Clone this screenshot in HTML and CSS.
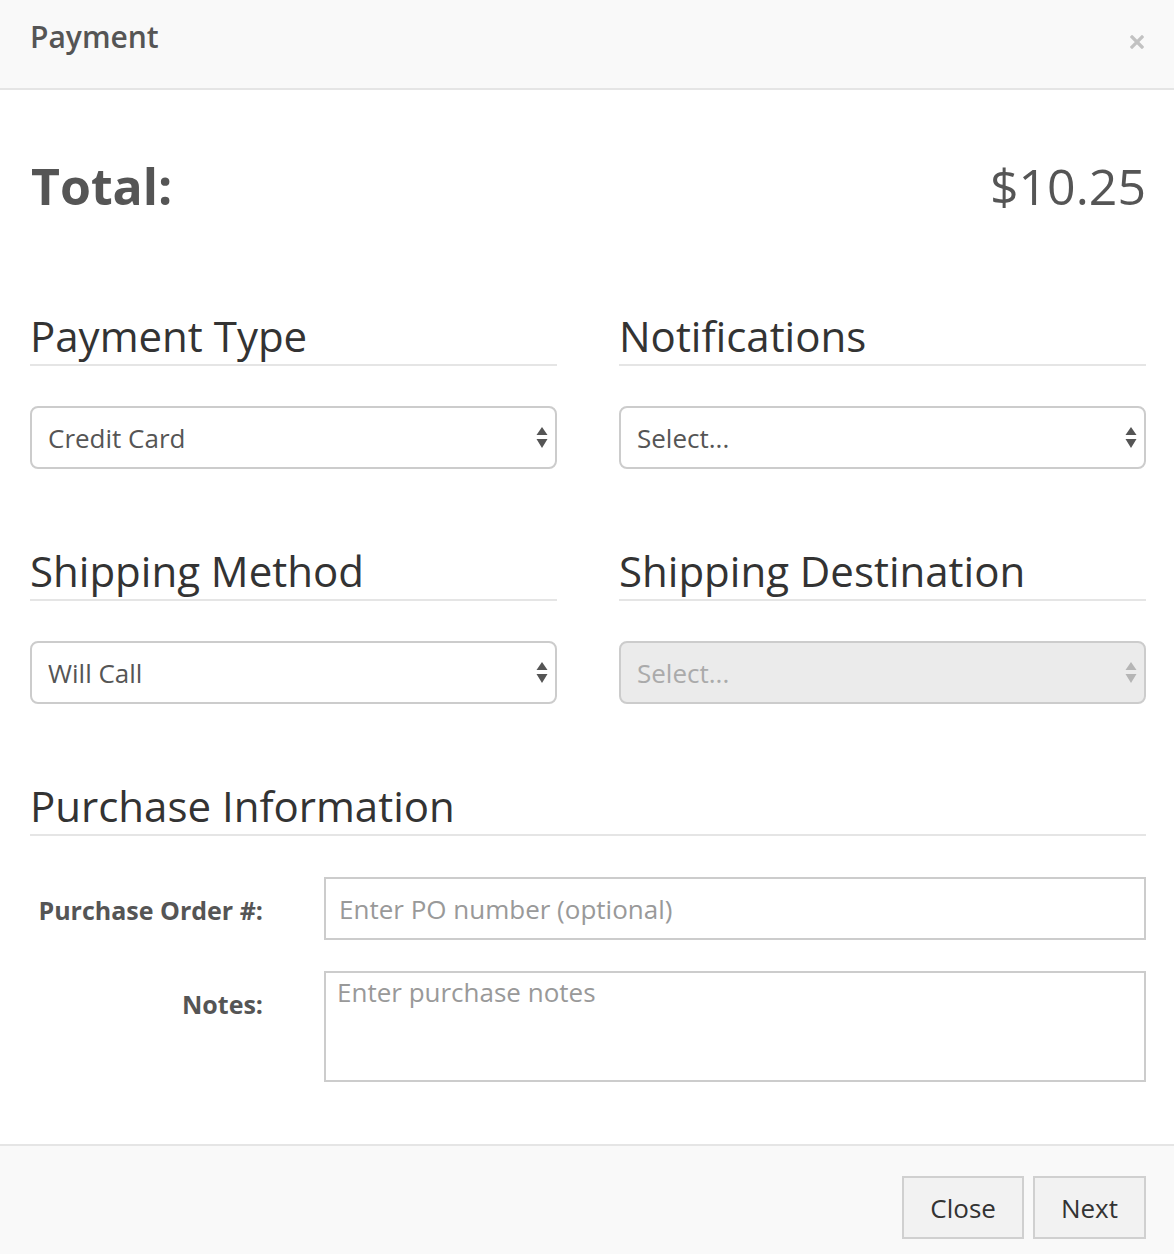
FILE: index.html
```html
<!DOCTYPE html>
<html lang="en">
<head>
<meta charset="utf-8">
<title>Payment</title>
<link rel="stylesheet" href="styles.css">
</head>
<body>
<div class="modal">
  <header class="modal-header">
    <h1 class="modal-title">Payment</h1>
    <button class="close" type="button" aria-label="Close">
      <svg width="14" height="14" viewBox="0 0 14 14"><path d="M2 2L12 12M12 2L2 12" stroke="#c2c2c2" stroke-width="3.2" stroke-linecap="square"/></svg>
    </button>
  </header>

  <main class="modal-body">
    <div class="total-row">
      <span class="total-label">Total:</span>
      <span class="total-value">$10.25</span>
    </div>

    <div class="grid">
      <section class="field">
        <h3 class="section-title">Payment Type</h3>
        <div class="select-wrap">
          <select class="select"><option>Credit Card</option></select>
          <svg class="arrows" width="12" height="22" viewBox="0 0 12 22"><path d="M6 0L11.5 8H0.5Z M0.5 12H11.5L6 21Z" fill="#555"/></svg>
        </div>
      </section>
      <section class="field">
        <h3 class="section-title">Notifications</h3>
        <div class="select-wrap">
          <select class="select"><option>Select...</option></select>
          <svg class="arrows" width="12" height="22" viewBox="0 0 12 22"><path d="M6 0L11.5 8H0.5Z M0.5 12H11.5L6 21Z" fill="#555"/></svg>
        </div>
      </section>
      <section class="field">
        <h3 class="section-title">Shipping Method</h3>
        <div class="select-wrap">
          <select class="select"><option>Will Call</option></select>
          <svg class="arrows" width="12" height="22" viewBox="0 0 12 22"><path d="M6 0L11.5 8H0.5Z M0.5 12H11.5L6 21Z" fill="#555"/></svg>
        </div>
      </section>
      <section class="field">
        <h3 class="section-title">Shipping Destination</h3>
        <div class="select-wrap">
          <select class="select" disabled><option>Select...</option></select>
          <svg class="arrows" width="12" height="22" viewBox="0 0 12 22"><path d="M6 0L11.5 8H0.5Z M0.5 12H11.5L6 21Z" fill="#b5b5b5"/></svg>
        </div>
      </section>
    </div>

    <section class="purchase">
      <h3 class="section-title">Purchase Information</h3>
      <div class="form-grid">
        <label class="form-label" for="po">Purchase Order #:</label>
        <input class="input" id="po" type="text" placeholder="Enter PO number (optional)">
        <label class="form-label" for="notes">Notes:</label>
        <textarea class="textarea" id="notes" placeholder="Enter purchase notes"></textarea>
      </div>
    </section>
  </main>

  <footer class="modal-footer">
    <button class="btn" type="button">Close</button>
    <button class="btn" type="button">Next</button>
  </footer>
</div>
</body>
</html>
```

FILE: styles.css
```css
* { box-sizing: border-box; }

html, body {
  margin: 0;
  padding: 0;
  background: #fff;
  overflow: hidden;
}

body {
  font-family: "Open Sans", "Liberation Sans", sans-serif;
  color: #333;
}

.modal {
  width: 1174px;
  height: 1254px;
  display: flex;
  flex-direction: column;
}

.modal-header {
  height: 90px;
  background: #f9f9f9;
  border-bottom: 2px solid #e5e5e5;
  display: flex;
  justify-content: space-between;
  align-items: flex-start;
  padding: 15px 30px 0 30px;
}

.modal-title {
  margin: 0;
  font-size: 30px;
  font-weight: 600;
  line-height: 44px;
  color: #555;
}

.close {
  margin-top: 20px;
  padding: 0;
  border: 0;
  background: transparent;
  width: 14px;
  height: 14px;
  display: flex;
}

.modal-body {
  flex: 1;
  padding: 0 28px 0 30px;
}

.total-row {
  display: flex;
  justify-content: space-between;
  align-items: baseline;
  margin-top: 66px;
  line-height: 61px;
  font-size: 50px;
  color: #555;
}

.total-label { font-weight: 700; padding-left: 1px; }
.total-value { font-weight: 400; }

.grid {
  margin-top: 97px;
  display: grid;
  grid-template-columns: 1fr 1fr;
  column-gap: 62px;
  row-gap: 80px;
}

.section-title {
  margin: 0;
  font-size: 42px;
  font-weight: 400;
  line-height: 44px;
  color: #333;
  padding-bottom: 6px;
  border-bottom: 2px solid #e5e5e5;
}

.select-wrap {
  position: relative;
  margin-top: 40px;
}

.select {
  -webkit-appearance: none;
  appearance: none;
  width: 100%;
  height: 63px;
  border: 2px solid #ccc;
  border-radius: 8px;
  background: #fff;
  font-family: inherit;
  font-size: 26px;
  color: #555;
  padding: 0 40px 0 16px;
  outline: none;
}

.select:disabled {
  background: #ebebeb;
  color: #aaa;
  opacity: 1;
}

.arrows {
  position: absolute;
  right: 9px;
  top: 21px;
  pointer-events: none;
}

.purchase {
  margin-top: 80px;
}

.form-grid {
  margin-top: 41px;
  display: grid;
  grid-template-columns: 233px 1fr;
  column-gap: 61px;
  row-gap: 31px;
}

.form-label {
  height: 63px;
  display: flex;
  align-items: center;
  justify-content: flex-end;
  font-size: 25px;
  font-weight: 700;
  color: #555;
  padding-top: 2px;
}

.input,
.textarea {
  width: 100%;
  border: 2px solid #ccc;
  border-radius: 0;
  font-family: inherit;
  font-size: 26px;
  color: #555;
  outline: none;
  background: #fff;
}

.input {
  height: 63px;
  padding: 0 13px;
}

.textarea {
  height: 111px;
  padding: 1px 11px;
  resize: none;
  line-height: 36px;
}

.input::placeholder,
.textarea::placeholder {
  color: #999;
}

.modal-footer {
  border-top: 2px solid #e5e5e5;
  background: #f9f9f9;
  display: flex;
  justify-content: flex-end;
  gap: 9px;
  padding: 30px 28px 15px 30px;
}

.btn {
  height: 63px;
  padding: 0 26px;
  border: 2px solid #d0d0d0;
  background: #f2f2f2;
  font-family: inherit;
  font-size: 26px;
  color: #333;
  border-radius: 0;
}
```
